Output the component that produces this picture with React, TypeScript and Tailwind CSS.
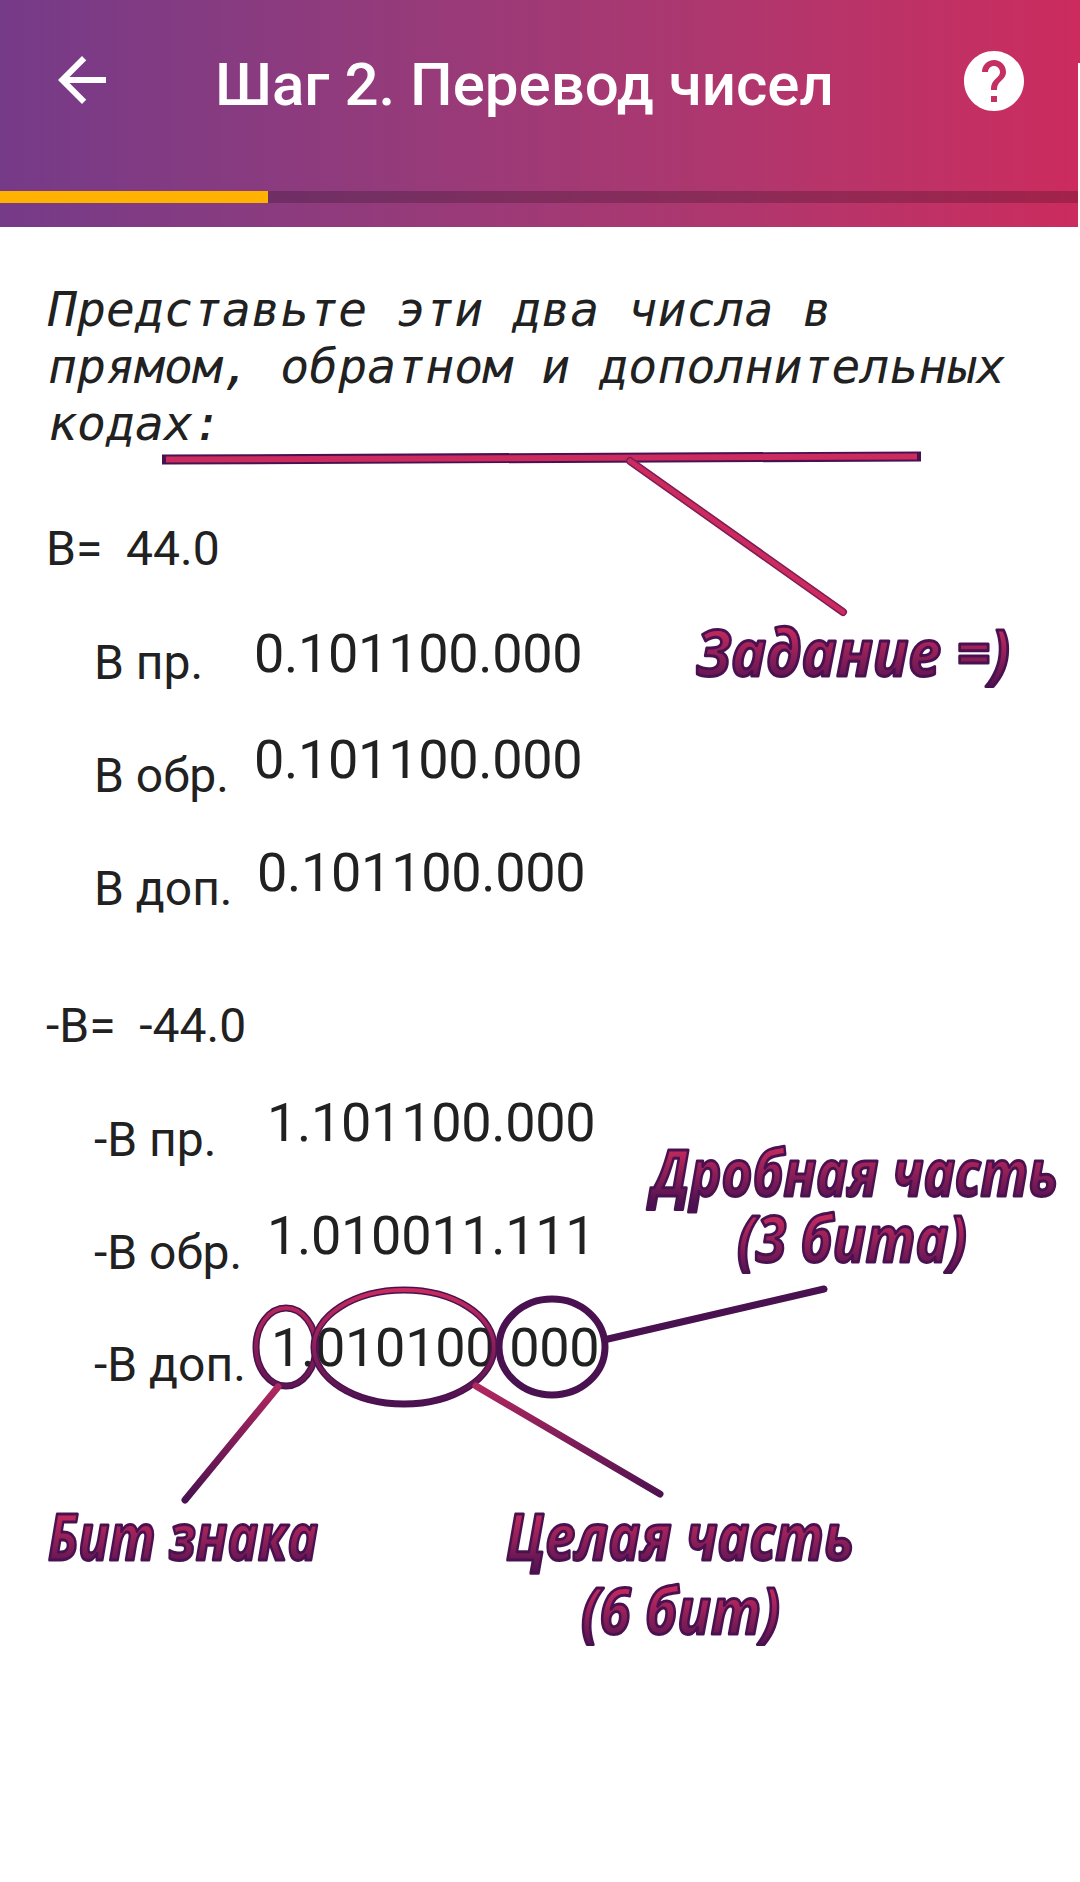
export default function App() {
  const num = "font-['Roboto',sans-serif] text-[54px] leading-[60px] text-[#212121] tracking-[-0.3px]";
  const lab = "font-['Roboto',sans-serif] text-[48px] leading-[50px] text-[#212121]";
  const ann = {
    fontFamily: "'Open Sans', sans-serif",
    fontWeight: 700,
    fontStyle: 'italic',
    fontSize: 64,
    strokeWidth: 3,
    strokeLinejoin: 'round' as const,
    strokeLinecap: 'round' as const,
    stroke: '#4a1150',
  };
  return (
    <div className="relative w-[1080px] h-[1882px] bg-white overflow-hidden">
      <header className="relative h-[227px] bg-linear-to-r from-[#753a88] to-[#cc2b5e] flex flex-col">
        <div className="flex items-start pt-[44px] pl-[46px] pr-[50px]">
          <svg viewBox="0 0 24 24" className="w-[72px] h-[72px] shrink-0 fill-white">
            <path d="M20 11H7.83l5.59-5.59L12 4l-8 8 8 8 1.41-1.41L7.83 13H20v-2z" />
          </svg>
          <h1 className="ml-[97px] flex-1 font-['Roboto',sans-serif] font-medium text-[60px] leading-[82px] text-white whitespace-nowrap">
            Шаг 2. Перевод чисел
          </h1>
          <svg viewBox="0 0 24 24" className="w-[72px] h-[72px] shrink-0 fill-white mt-[1px]">
            <path d="M12 2C6.48 2 2 6.48 2 12s4.48 10 10 10 10-4.48 10-10S17.52 2 12 2zm1 17h-2v-2h2v2zm2.07-7.75l-.9.92C13.45 12.9 13 13.5 13 15h-2v-.5c0-1.1.45-2.1 1.17-2.83l1.24-1.26c.37-.36.59-.86.59-1.41 0-1.1-.9-2-2-2s-2 .9-2 2H8c0-2.21 1.79-4 4-4s4 1.79 4 4c0 .88-.36 1.68-.93 2.25z" />
          </svg>
        </div>
        <div className="mt-[65px] h-[12px] w-[1078px] bg-black/20">
          <div className="h-full w-[268px] bg-[#ffb300]" />
        </div>
        <div className="absolute right-0 top-[63px] bottom-0 w-[2px] bg-white" />
      </header>

      <main className="pl-[46px] pr-[44px] pt-[54px]">
        <p className="pl-[2px] font-['DejaVu_Sans_Mono',monospace] italic text-[48px] leading-[57px] tracking-[0.12px] text-[#212121]">
          Представьте эти два числа в прямом, обратном и дополнительных кодах:
        </p>

        <div className={`${lab} mt-[72px]`}>B=&nbsp; 44.0</div>

        <div className="mt-[50px] flex pl-[48px]">
          <div className={`${lab} w-[160px] mt-[14px] whitespace-nowrap`}>В пр.</div>
          <div className={num}>0.101100.000</div>
        </div>
        <div className="mt-[42px] flex pl-[48px]">
          <div className={`${lab} w-[160px] mt-[21px] whitespace-nowrap`}>В обр.</div>
          <div className={num}>0.101100.000</div>
        </div>
        <div className="mt-[42px] flex pl-[48px]">
          <div className={`${lab} w-[163px] mt-[21px] whitespace-nowrap`}>В доп.</div>
          <div className={num}>0.101100.000</div>
        </div>

        <div className={`${lab} mt-[87px]`}>-В=&nbsp; -44.0</div>

        <div className="mt-[42px] flex pl-[48px]">
          <div className={`${lab} w-[173px] mt-[22px] whitespace-nowrap`}>-В пр.</div>
          <div className={num}>1.101100.000</div>
        </div>
        <div className="mt-[41px] flex pl-[48px]">
          <div className={`${lab} w-[173px] mt-[22px] whitespace-nowrap`}>-В обр.</div>
          <div className={num}>1.010011.111</div>
        </div>
        <div className="mt-[40px] flex pl-[48px]">
          <div className={`${lab} w-[177px] mt-[22px] whitespace-nowrap`}>-В доп.</div>
          <div className={num}>1.010100.000</div>
        </div>
      </main>

      <svg className="absolute left-0 top-0 pointer-events-none" width="1080" height="1882" viewBox="0 0 1080 1882" fill="none">
        <defs>
          <linearGradient id="g1" gradientUnits="userSpaceOnUse" x1="0" y1="625" x2="0" y2="690">
            <stop offset="0" stopColor="#cc2b5e" /><stop offset="1" stopColor="#4a1150" />
          </linearGradient>
          <linearGradient id="g2" gradientUnits="userSpaceOnUse" x1="0" y1="1145" x2="0" y2="1205">
            <stop offset="0" stopColor="#cc2b5e" /><stop offset="1" stopColor="#4a1150" />
          </linearGradient>
          <linearGradient id="g3" gradientUnits="userSpaceOnUse" x1="0" y1="1212" x2="0" y2="1278">
            <stop offset="0" stopColor="#cc2b5e" /><stop offset="1" stopColor="#4a1150" />
          </linearGradient>
          <linearGradient id="g4" gradientUnits="userSpaceOnUse" x1="0" y1="1510" x2="0" y2="1575">
            <stop offset="0" stopColor="#cc2b5e" /><stop offset="1" stopColor="#4a1150" />
          </linearGradient>
          <linearGradient id="g5" gradientUnits="userSpaceOnUse" x1="0" y1="1585" x2="0" y2="1650">
            <stop offset="0" stopColor="#cc2b5e" /><stop offset="1" stopColor="#4a1150" />
          </linearGradient>
          <linearGradient id="l1" gradientUnits="userSpaceOnUse" x1="0" y1="1288" x2="0" y2="1406">
            <stop offset="0" stopColor="#cc2b5e" /><stop offset="1" stopColor="#4a1150" />
          </linearGradient>
          <linearGradient id="l2" gradientUnits="userSpaceOnUse" x1="0" y1="1386" x2="0" y2="1500">
            <stop offset="0" stopColor="#b0285f" /><stop offset="1" stopColor="#4a1150" />
          </linearGradient>
        </defs>

        <path d="M162 459.5 L921 456.5" stroke="#4a1150" strokeWidth="10" />
        <path d="M166 459.5 L917 456.5" stroke="#cc2b5e" strokeWidth="6" />
        <path d="M630 461 L843 612" stroke="#7d1c58" strokeWidth="8" strokeLinecap="round" />
        <path d="M630 461 L843 612" stroke="#cc2b5e" strokeWidth="5" strokeLinecap="round" />

        <ellipse cx="286" cy="1347" rx="30" ry="39" stroke="#4a1150" strokeWidth="7" />
        <ellipse cx="286" cy="1347" rx="30" ry="39" stroke="url(#l1)" strokeWidth="4" />
        <ellipse cx="404" cy="1347" rx="90" ry="57" stroke="#4a1150" strokeWidth="7" />
        <ellipse cx="404" cy="1347" rx="90" ry="57" stroke="url(#l1)" strokeWidth="4" />
        <ellipse cx="552" cy="1347" rx="53" ry="48" stroke="#4a1150" strokeWidth="7" />

        <path d="M278 1387 L185 1500" stroke="url(#l2)" strokeWidth="7" strokeLinecap="round" />
        <path d="M476 1386 L660 1494" stroke="url(#l2)" strokeWidth="7" strokeLinecap="round" />
        <path d="M608 1339 L824 1289" stroke="#4a1150" strokeWidth="7" strokeLinecap="round" />

        <text x="696" y="676" textLength="314" lengthAdjust="spacingAndGlyphs" fill="url(#g1)" {...ann}>Задание =)</text>
        <text x="652" y="1196" textLength="406" lengthAdjust="spacingAndGlyphs" fill="url(#g2)" {...ann}>Дробная часть</text>
        <text x="737" y="1262" textLength="230" lengthAdjust="spacingAndGlyphs" fill="url(#g3)" {...ann}>(3 бита)</text>
        <text x="48" y="1560" textLength="270" lengthAdjust="spacingAndGlyphs" fill="url(#g4)" {...ann}>Бит знака</text>
        <text x="506" y="1560" textLength="348" lengthAdjust="spacingAndGlyphs" fill="url(#g4)" {...ann}>Целая часть</text>
        <text x="581" y="1634" textLength="199" lengthAdjust="spacingAndGlyphs" fill="url(#g5)" {...ann}>(6 бит)</text>
      </svg>
    </div>
  );
}
